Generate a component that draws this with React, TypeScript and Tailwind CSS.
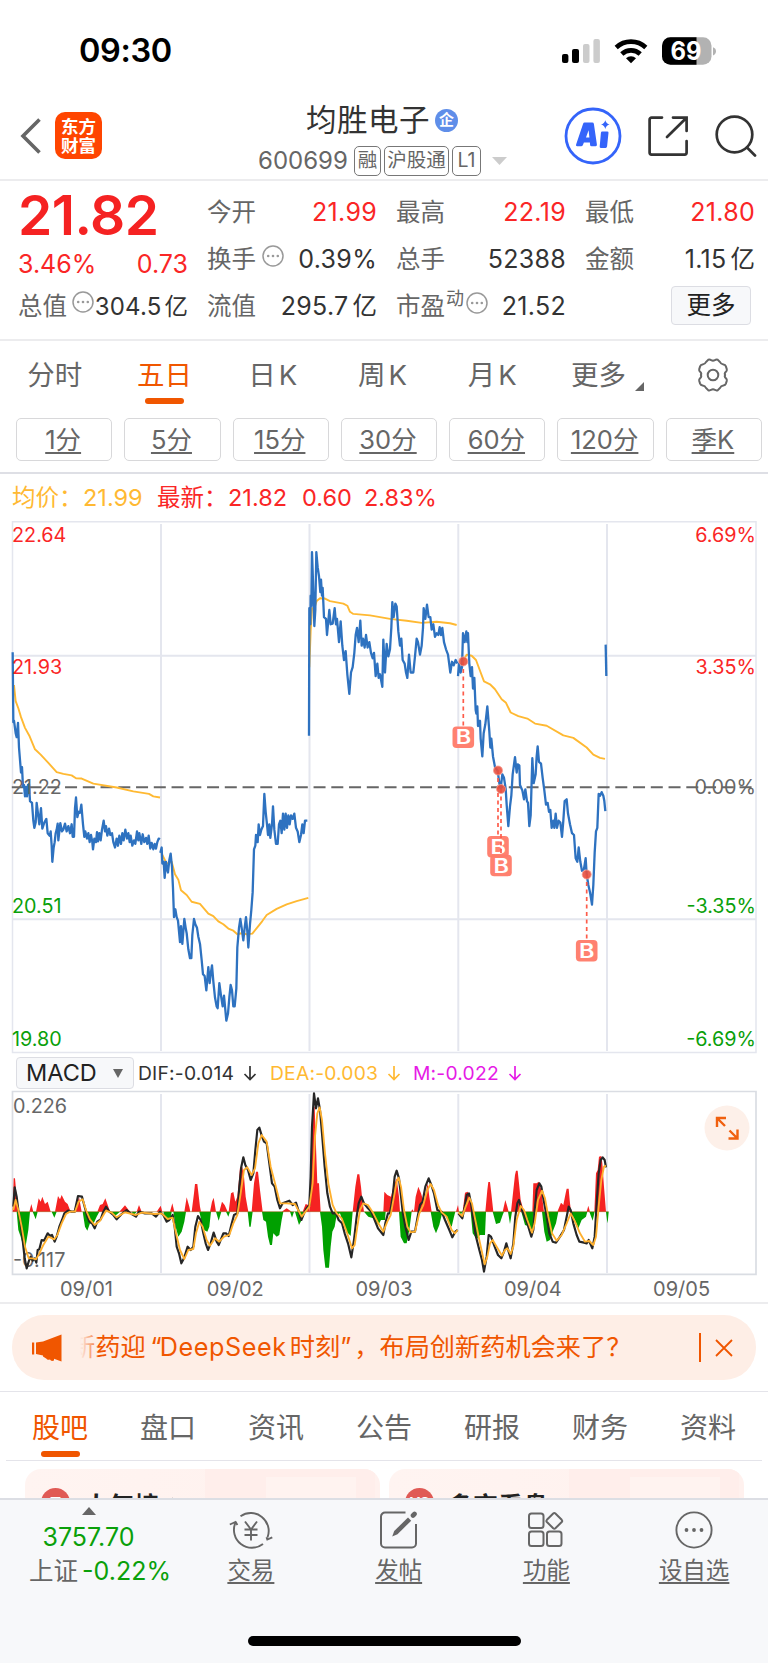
import React from 'react';
import clsx from 'clsx';

// --- Chart data ---
// Price series live on a 2232 x 1487 grid (three units per px across, 2.8 down).
const PRICE_LINES = [
  '38,398 40,594 42,590 47,625 50,636 54,596 57,665 60,700 63,735 66,720 69,775 72,770 75,802 78,775 81,802 84,770 87,768 90,815 96,820 100,870 103,890 107,875 110,820 114,850 118,880 123,835 127,892 133,875 139,865 143,905 149,912 152,900 155,940 157,985 161,945 164,930 167,905 170,895 173,878 175,925 181,877 186,900 190,895 195,878 200,900 205,885 210,905 215,880 218,915 222,915 225,835 228,805 232,860 236,845 240,848 244,825 249,880 253,915 256,900 261,920 265,905 269,930 273,910 277,930 279,950 283,920 288,930 291,902 294,928 298,905 302,925 306,895 311,870 315,900 318,885 322,912 327,892 331,910 336,905 340,930 345,945 350,920 354,940 358,912 363,935 367,905 371,925 376,895 381,920 385,905 389,930 392,912 397,940 402,925 406,935 411,900 415,925 418,905 424,935 428,908 433,930 438,918 442,935 446,912 451,948 455,932 460,950 464,935 468,948 472,930 476,920 480,922',
  '481,960 485,945 487,990 491,985 494,1030 498,985 501,1005 504,1015 508,980 512,962 516,1000 519,1060 522,1140 526,1118 530,1140 534,1150 537,1180 540,1210 543,1165 547,1215 550,1180 553,1145 557,1170 560,1185 565,1230 570,1255 574,1255 577,1190 582,1145 586,1160 591,1170 595,1195 600,1215 605,1260 609,1300 614,1305 619,1345 625,1280 629,1325 632,1300 636,1275 640,1320 645,1365 650,1390 653,1395 658,1325 663,1360 668,1390 672,1360 676,1400 679,1430 684,1410 688,1365 692,1330 696,1345 700,1390 704,1390 709,1340 712,1225 717,1170 721,1145 725,1170 730,1205 734,1170 738,1140 742,1180 745,1225 750,1160 754,1120 758,1070 762,950 766,940 768,910 773,930 776,880 780,910 784,895 789,885 793,795 797,845 801,880 804,910 808,880 811,918 816,880 819,830 823,895 828,935 833,935 837,880 841,870 845,905 849,850 853,895 857,850 861,890 865,855 869,880 873,855 878,865 883,850 888,890 893,900 898,930 903,910 907,880 911,905 915,870 922,870',
  '927,632 928,275 931,320 932,240 934,270 936,118 939,200 943,325 946,280 949,118 953,160 957,185 961,230 963,195 966,240 968,218 972,300 978,305 981,350 985,310 988,280 992,320 998,318 1004,275 1008,320 1011,305 1017,370 1022,312 1027,380 1032,420 1037,395 1042,460 1048,515 1053,455 1058,440 1063,400 1067,350 1071,330 1076,370 1081,310 1085,380 1089,360 1094,385 1098,350 1103,385 1108,370 1113,400 1118,415 1122,400 1127,465 1132,430 1136,470 1140,460 1147,495 1150,363 1155,455 1160,375 1165,410 1170,390 1174,330 1177,258 1181,300 1186,262 1190,270 1195,340 1200,380 1204,360 1208,420 1214,430 1218,455 1222,470 1227,405 1232,455 1240,455 1245,410 1250,360 1254,370 1260,405 1265,380 1269,330 1271,275 1276,305 1281,265 1286,300 1291,300 1295,335 1300,320 1305,355 1310,345 1315,350 1319,328 1323,350 1327,330 1332,370 1338,390 1344,405 1351,455 1356,425 1361,435 1367,420 1372,430',
  '1374,465 1377,430 1382,455 1386,440 1389,345 1394,370 1399,340 1402,370 1404,345 1408,430 1412,465 1416,440 1419,500 1423,470 1427,560 1429,570 1432,550 1434,605 1440,590 1442,640 1447,690 1451,625 1456,600 1462,550 1468,620 1471,665 1474,640 1479,690 1485,720 1493,730 1498,765 1502,780 1507,740 1512,750 1517,780 1520,825 1525,885 1530,830 1534,800 1538,740 1545,692 1550,735 1553,712 1558,715 1560,770 1567,785 1572,810 1576,782 1581,815 1584,820 1588,885 1592,855 1597,695 1601,765 1607,740 1610,690 1613,662 1617,705 1623,710 1628,750 1633,785 1638,825 1643,820 1647,845 1651,840 1655,890 1660,870 1663,890 1667,850 1671,890 1676,870 1681,875 1686,915 1690,870 1694,815 1700,810 1704,850 1710,880 1716,905 1722,910 1727,975 1732,985 1736,945 1741,985 1746,1010 1752,1005 1757,975 1760,1020 1765,1050 1770,1070 1776,1105 1780,1050 1784,960 1788,900 1792,890 1796,795 1800,800 1805,790 1810,800 1813,815 1816,843',
  '1817,377 1819,465',
];

const AVERAGE_LINES = [
  '42,490 47,535 55,555 63,580 75,610 88,632 105,670 122,685 145,708 170,734 190,739 215,743 228,751 245,752 280,766 350,777 400,788 447,795 460,802 480,805',
  '484,960 492,975 500,990 515,985 525,1020 535,1035 543,1065 560,1078 575,1097 600,1103 625,1130 640,1137 655,1152 670,1160 685,1172 700,1178 712,1188 725,1185 740,1188 757,1186 775,1165 787,1151 800,1134 830,1117 860,1104 890,1095 925,1086',
  '928,440 932,340 936,275 943,275 950,255 960,247 975,248 990,255 1030,262 1042,268 1050,285 1060,291 1110,295 1170,305 1220,310 1265,316 1310,313 1350,317 1370,322',
  '1389,425 1400,405 1415,408 1428,420 1440,450 1452,480 1470,488 1485,502 1505,530 1518,540 1532,567 1555,577 1582,584 1605,598 1640,604 1690,631 1720,638 1760,665 1780,685 1800,694 1815,697',
];

// MACD series use three units per px on both axes, zero at y = 485.
const HIST_UP =
  '38,485 41,385 45,385 49,430 53,485 88,485 94,462 100,485 108,485 116,445 122,455 127,440 135,462 143,455 152,485 165,485 174,438 180,448 185,435 195,455 203,462 212,485 220,485 228,468 233,455 237,440 245,485 292,485 300,465 308,462 316,445 325,470 330,485 358,485 375,466 390,485 410,485 417,465 425,485 470,485 482,467 487,485 510,485 517,460 523,485 553,485 560,442 568,470 571,485 575,485 582,430 585,402 592,402 600,470 603,485 630,485 636,455 641,443 648,485 658,485 666,455 674,465 683,485 686,485 693,430 700,426 706,455 712,440 716,400 720,352 727,352 732,380 737,440 745,485 755,485 762,400 768,365 774,365 780,420 788,485 845,485 860,475 875,485 908,485 917,462 925,465 928,485 935,230 939,170 944,170 948,290 952,400 957,400 962,485 1058,485 1066,410 1072,373 1078,373 1083,410 1087,450 1092,485 1150,485 1153,425 1162,435 1173,440 1180,410 1190,385 1197,440 1200,485 1233,485 1237,478 1242,485 1247,440 1255,410 1263,430 1272,460 1277,430 1283,400 1288,440 1295,485 1368,485 1374,465 1377,485 1388,485 1395,428 1403,425 1410,440 1415,485 1456,485 1462,420 1465,396 1470,396 1474,430 1480,485 1508,485 1516,450 1522,470 1526,485 1533,485 1540,420 1545,375 1548,362 1553,362 1557,400 1562,450 1572,485 1597,485 1600,400 1610,400 1616,395 1624,420 1632,485 1672,485 1683,458 1690,465 1697,430 1700,416 1706,416 1709,450 1713,485 1760,485 1765,467 1770,485 1783,485 1788,370 1793,360 1797,320 1804,318 1807,340 1812,410 1818,485';

const HIST_DOWN =
  '50,485 55,540 62,560 70,590 75,600 80,570 85,540 90,485 98,485 107,508 113,485 155,485 163,503 170,485 248,485 255,530 262,542 270,520 280,522 290,500 298,485 330,485 345,498 360,485 395,485 402,495 410,485 490,485 500,517 512,505 515,485 520,485 527,530 535,560 545,545 553,515 558,485 598,485 605,515 612,540 622,545 628,530 633,485 648,485 656,512 664,485 678,485 685,500 690,485 743,485 748,530 752,530 758,485 786,485 790,510 798,515 804,560 810,585 816,585 820,550 830,560 838,555 845,510 850,485 870,485 876,503 882,485 885,485 897,525 905,510 910,485 960,485 966,530 970,600 976,653 987,653 992,590 997,545 1004,530 1010,495 1020,490 1030,520 1040,545 1052,558 1058,485 1092,485 1105,500 1120,505 1135,525 1143,510 1155,510 1157,485 1197,485 1202,560 1212,580 1220,580 1228,540 1235,485 1292,485 1300,530 1308,550 1318,525 1325,495 1337,495 1346,520 1355,530 1362,500 1366,485 1377,485 1380,500 1387,485 1412,485 1418,550 1430,568 1440,555 1455,555 1458,485 1478,485 1488,522 1500,518 1508,495 1512,485 1524,485 1530,522 1536,485 1564,485 1575,525 1590,530 1598,545 1602,485 1626,485 1633,545 1640,575 1650,570 1660,540 1668,520 1675,485 1712,485 1725,510 1735,535 1745,510 1758,500 1762,485 1768,485 1778,512 1784,485 1818,485 1821,510 1823,520 1826,485';

const DIF_LINE =
  '40,470 44,412 50,440 55,480 62,520 68,570 74,625 80,655 86,635 92,620 98,632 104,625 109,638 113,600 118,598 125,570 132,572 143,550 150,558 156,555 164,575 170,560 178,530 186,510 193,490 204,482 215,485 224,485 234,438 246,440 254,470 262,500 268,515 276,520 284,535 292,515 302,508 310,485 318,470 328,485 340,495 350,508 365,492 380,480 395,492 408,500 417,485 435,490 455,490 468,500 480,485 490,495 500,515 508,510 518,495 524,530 530,590 537,610 544,640 552,625 563,590 572,600 580,590 586,530 594,498 602,510 610,550 617,580 624,600 632,580 641,548 650,575 656,585 664,565 670,550 678,550 686,558 694,525 702,495 712,490 718,410 724,350 730,322 736,345 744,360 752,390 760,370 766,300 772,240 778,233 786,260 792,275 800,280 808,340 816,400 824,410 832,450 840,475 848,460 860,455 868,452 878,465 888,458 895,480 904,510 912,490 920,475 928,465 932,380 936,230 942,130 948,175 954,145 960,180 966,250 974,350 982,430 990,470 998,490 1008,490 1016,510 1026,520 1034,550 1044,580 1054,622 1062,570 1070,500 1076,460 1084,440 1092,460 1104,475 1114,485 1124,510 1134,535 1150,555 1156,520 1164,490 1170,490 1178,440 1184,380 1190,362 1197,385 1202,430 1208,485 1216,530 1226,570 1234,545 1245,545 1253,500 1260,465 1268,455 1276,410 1286,385 1294,405 1302,430 1312,480 1325,485 1335,510 1348,540 1357,562 1366,545 1373,540';

const DIF_LAST_DAY =
  '1375,490 1387,505 1394,470 1400,435 1407,430 1413,460 1420,510 1428,560 1438,600 1446,630 1452,665 1460,620 1466,555 1473,560 1484,590 1494,615 1504,625 1512,605 1519,580 1526,605 1532,625 1540,580 1546,500 1552,460 1557,450 1564,475 1572,495 1582,520 1594,560 1600,540 1604,480 1610,420 1618,400 1624,410 1631,450 1640,500 1648,550 1658,575 1668,578 1680,560 1692,540 1700,500 1706,470 1712,480 1720,520 1730,555 1738,575 1752,578 1760,580 1766,570 1777,595 1784,560 1790,460 1796,370 1802,330 1808,322 1814,330 1818,352';

const DEA_LINE =
  '40,480 47,450 55,480 65,530 75,590 86,625 98,625 108,628 118,610 130,585 145,560 163,568 172,555 185,520 198,492 210,485 225,485 236,455 248,448 258,480 270,508 284,525 300,512 318,482 335,488 350,502 375,487 408,495 425,488 465,492 485,490 503,507 518,503 528,550 540,600 553,627 565,600 580,597 588,550 598,515 608,530 620,570 630,587 645,565 658,575 672,560 688,555 700,520 712,495 722,430 732,360 742,352 755,375 765,355 775,280 785,255 800,275 812,350 825,400 840,460 860,460 885,462 905,500 928,470 938,400 945,260 952,190 959,172 966,210 975,310 985,400 998,465 1010,490 1025,505 1040,545 1056,595 1064,585 1072,530 1080,480 1090,460 1104,465 1120,490 1135,520 1150,545 1162,515 1172,495 1182,440 1190,395 1196,383 1203,410 1212,480 1222,530 1232,547 1245,545 1258,490 1270,465 1282,420 1292,402 1302,420 1314,465 1325,487 1340,500 1355,540 1365,550 1373,540';

const DEA_LAST_DAY =
  '1375,488 1387,498 1397,470 1408,443 1416,460 1426,510 1438,570 1454,643 1462,620 1470,580 1478,570 1490,590 1506,617 1515,600 1522,595 1532,612 1540,590 1550,510 1562,468 1572,480 1582,510 1596,548 1604,520 1614,450 1626,422 1635,445 1645,500 1656,550 1670,572 1685,555 1700,520 1712,490 1725,515 1740,550 1755,575 1768,573 1780,585 1788,560 1796,470 1804,390 1812,350 1818,347';

const BUY_MARKS = [
  { x: 463.3, dot: 661.4, tag: 737.3 },
  { x: 498, dot: 770.5, tag: 846.8 },
  { x: 501, dot: 789, tag: 865.5 },
  { x: 586.7, dot: 874.5, tag: 950.8 },
];

const DAY_LINES = [161, 309.5, 458.3, 607];

// --- Header icons ---
const StatusIcons: React.FC = () => (
  <svg width="156" height="30" viewBox="561 36 156 30">
    <rect x="562" y="54" width="6.4" height="9" rx="2" />
    <rect x="572" y="49" width="7" height="14" rx="2" />
    <rect x="583" y="44" width="6.5" height="19" rx="2" fill="#ccc" />
    <rect x="593.4" y="39" width="6.5" height="24" rx="2" fill="#ccc" />
    <g fill="none" stroke="#000" strokeWidth="4.6">
      <path d="M616.2 47.5a21.6 21.6 0 0 1 29.6 0" />
      <path d="M621.8 54a13.4 13.4 0 0 1 18.4 0" />
    </g>
    <path d="M631 63.3l-5-5.1a7.3 7.3 0 0 1 10 0z" />
    <clipPath id="battery">
      <rect x="662" y="37.3" width="49.5" height="27.4" rx="8.5" />
    </clipPath>
    <g clipPath="url(#battery)">
      <rect x="662" y="37" width="50" height="28" fill="#b2b2b2" />
      <rect x="662" y="37" width="34.5" height="28" />
    </g>
    <path d="M713 47.2q3 1.2 3 4.1t-3 4.1z" fill="#b2b2b2" />
    <text x="686" y="60" fill="#fff" fontSize="25" fontWeight="700" textAnchor="middle" textLength="31" lengthAdjust="spacingAndGlyphs">69</text>
  </svg>
);

const AiIcon: React.FC = () => (
  <svg width="58" height="58" viewBox="0 0 58 58">
    <circle cx="29" cy="29" r="27" fill="none" stroke="#3464fa" strokeWidth="2.8" />
    <g fill="#3464fa">
      <path fillRule="evenodd" d="M20.5 15.6h7.8q1.4 0 1.6 1.4l3 20.6q.2 1.6-1.2 1.6h-4.2q-1.3 0-1.4-1.3l-.2-2.3h-6l-1 2.4q-.5 1.2-1.8 1.2h-4q-1.6 0-1-1.6l7-20.8q.4-1.2 1.4-1.2zm4.1 7.6-2.6 7.4h3.4z" />
      <path d="M38.2 24.5h5.1q1.3 0 1.2 1.3l-1.4 13.5q-.2 1.6-1.5 1.6h-4.8q-1.3 0-1.1-1.4l1.2-13.6q.1-1.4 1.3-1.4z" />
      <path d="M41.3 13.2q.9 3.5 4.3 4.4-3.4.9-4.3 4.4-.9-3.5-4.3-4.4 3.4-.9 4.3-4.4z" />
    </g>
  </svg>
);

const ShareIcon: React.FC = () => (
  <svg width="42" height="42" viewBox="0 0 42 42" fill="none" stroke="#333" strokeWidth="2.7" strokeLinecap="round">
    <path d="M15 2.6H4.6a2 2 0 0 0-2 2v33a2 2 0 0 0 2 2h33a2 2 0 0 0 2-2V26" />
    <path d="M26 2.6h13.6V16M39 3.2 20 22" />
  </svg>
);

const SearchIcon: React.FC = () => (
  <svg width="42" height="42" viewBox="0 0 42 42" fill="none" stroke="#333" strokeWidth="2.7" strokeLinecap="round">
    <circle cx="19.5" cy="19.5" r="17.8" />
    <path d="M32 32.5l8 8" />
  </svg>
);

const InfoDots: React.FC = () => (
  <svg className="shrink-0" width="22" height="22" viewBox="0 0 22 22">
    <circle cx="11" cy="11" r="10" fill="none" stroke="#999" strokeWidth="1.5" />
    <g fill="#999">
      <circle cx="6.2" cy="11" r="1.3" />
      <circle cx="11" cy="11" r="1.3" />
      <circle cx="15.8" cy="11" r="1.3" />
    </g>
  </svg>
);

const StockTag: React.FC<{ label: string; className: string }> = ({ label, className }) => (
  <span className={clsx('flex h-[30px] items-center justify-center rounded-[5px] border-[1.5px] border-[#777] text-[19.5px] text-[#666]', className)}>
    {label}
  </span>
);

const Header: React.FC = () => (
  <header className="flex h-[81px] items-start border-b-2 border-[#ececee]">
    <svg className="mt-[18px] ml-[19px]" width="24" height="36" viewBox="0 0 24 36" fill="none" stroke="#666" strokeWidth="3.6">
      <path d="M20.5 1.5 4 18l16.5 16.5" />
    </svg>
    <div className="mt-[12px] ml-[12px] flex h-[47px] w-[47px] flex-col items-center justify-center rounded-[10px] bg-[#ff4500] text-[17.5px] leading-[19px] font-bold text-white">
      <span>东方</span>
      <span>财富</span>
    </div>
    <div className="ml-[156px] w-[256px]">
      <div className="flex h-[40px] items-center pl-[48px] text-[30.5px] tracking-[0.5px] text-[#333]">
        均胜电子
        <span className="ml-[5px] flex h-[23px] w-[23px] items-center justify-center rounded-full bg-[#5f8ee9] text-[15px] font-bold tracking-normal text-white">企</span>
      </div>
      <div className="mt-[5px] flex h-[32px] items-center text-[#666]">
        <span className="w-[96px] text-[24px]">600699</span>
        <StockTag label="融" className="w-[27px]" />
        <StockTag label="沪股通" className="ml-[3px] w-[65px]" />
        <StockTag label="L1" className="ml-[3px] w-[29px]" />
        <svg className="ml-[11px]" width="15" height="8" viewBox="0 0 15 8" fill="#ccc">
          <path d="M0 0h15L7.5 8z" />
        </svg>
      </div>
    </div>
    <div className="mt-[7px] ml-[50px]">
      <AiIcon />
    </div>
    <div className="mt-[15px] ml-[25px]">
      <ShareIcon />
    </div>
    <div className="mt-[15px] ml-[26px]">
      <SearchIcon />
    </div>
  </header>
);

// --- Quote summary ---
interface StatProps {
  label: string;
  value: string;
  unit?: string;
  className: string;
  up?: boolean;
  info?: boolean;
  mark?: string;
}

const Stat: React.FC<StatProps> = ({ label, value, unit, className, up, info, mark }) => (
  <div className={clsx('flex h-[47px] items-center justify-between whitespace-nowrap', className)}>
    <span className="flex items-center text-[24.5px] text-[#666]">
      {label}
      {mark && <sup className="top-[-8px] ml-[1px] text-[18px] leading-none">{mark}</sup>}
      {info && (
        <span className={clsx('relative -top-[4px]', mark ? 'ml-[2px]' : 'ml-[6px]')}>
          <InfoDots />
        </span>
      )}
    </span>
    <span className={clsx('text-[25px] tracking-[0.3px]', up ? 'text-[#fa2626]' : 'text-[#333]')}>
      {value}
      {unit && <span className="ml-[4px] text-[24.5px] tracking-normal">{unit}</span>}
    </span>
  </div>
);

const QuoteSummary: React.FC = () => (
  <section className="flex h-[160px] border-b-2 border-[#ececee] pl-[18px]">
    <div className="w-[170px]">
      <div className="flex h-[66px] items-center pt-[2px] text-[55px] leading-none font-semibold tracking-[-0.5px] text-[#f52222]">21.82</div>
      <div className="flex h-[36px] items-center justify-between text-[25px] text-[#fa2626]">
        <span>3.46%</span>
        <span>0.73</span>
      </div>
      <div className="flex h-[46px] items-center justify-between whitespace-nowrap text-[24.5px]">
        <span className="flex items-center text-[#666]">
          总值
          <span className="relative -top-[4px] ml-[5px]">
            <InfoDots />
          </span>
        </span>
        <span className="pt-[2px] text-[24px] tracking-[0.2px] text-[#333]">
          304.5<span className="ml-[3px] text-[23.5px] tracking-normal">亿</span>
        </span>
      </div>
    </div>
    <div className="ml-[19px] pt-[8px]">
      <Stat className="w-[170px]" label="今开" value="21.99" up />
      <Stat className="w-[170px]" label="换手" value="0.39%" info />
      <Stat className="w-[170px]" label="流值" value="295.7" unit="亿" />
    </div>
    <div className="ml-[19px] pt-[8px]">
      <Stat className="w-[170px]" label="最高" value="22.19" up />
      <Stat className="w-[170px]" label="总手" value="52388" />
      <Stat className="w-[170px]" label="市盈" value="21.52" mark="动" info />
    </div>
    <div className="ml-[19px] pt-[8px]">
      <Stat className="w-[170px]" label="最低" value="21.80" up />
      <Stat className="w-[170px]" label="金额" value="1.15" unit="亿" />
      <button className="mt-[3px] ml-[86px] flex h-[39px] w-[80px] items-center justify-center rounded-[4px] border-[1.5px] border-[#dcdde3] bg-[#f7f8fa] text-[24.5px] text-[#222]">
        更多
      </button>
    </div>
  </section>
);

// --- Period switcher ---
const PERIODS = ['分时', '五日', '日K', '周K', '月K', '更多'];
const MINUTES = ['1分', '5分', '15分', '30分', '60分', '120分', '季K'];

const PeriodTabs: React.FC = () => (
  <nav className="h-[133px] border-b-2 border-[#dedfe5]">
    <div className="grid h-[77px] grid-cols-7 text-[27.5px] text-[#666]">
      {PERIODS.map(p => (
        <div key={p} className={clsx('flex flex-col items-center pt-[14px]', p === '五日' && 'text-[#f05600]')}>
          <span className={clsx('relative flex h-[41px] items-center leading-none', p.endsWith('K') && 'tracking-[3px]', p === '更多' && '-left-[5px]')}>
            {p}
            {p === '更多' && (
              <svg className="absolute right-[-18px] bottom-[5px]" width="9" height="9" viewBox="0 0 9 9" fill="#666">
                <path d="M9 0v9H0z" />
              </svg>
            )}
          </span>
          {p === '五日' && <i className="mt-[2px] h-[6px] w-[39px] rounded-full bg-[#f05600]" />}
        </div>
      ))}
      <div className="flex justify-center pt-[17px]">
        <svg width="34" height="34" viewBox="0 0 34 34" fill="none" stroke="#666" strokeWidth="2">
          <path d="M12.2 1.8q1.6-.6 3 .4 1.800 1.200 3.600 0 1.400-1 3-.4l2.200 2.200q.9 2.300 3.400 2.600 1.900.2 2.500 1.800l.9 2.800q.3 1.600-.9 2.600-1.800 1.500-.8 3.200-1 1.700.8 3.200 1.200 1 .9 2.600l-.9 2.800q-.6 1.600-2.500 1.800-2.500.3-3.400 2.600l-2.200 2.200q-1.600.6-3-.4-1.800-1.200-3.600 0-1.400 1-3 .4l-2.200-2.200q-.9-2.300-3.400-2.600-1.900-.2-2.500-1.800l-.9-2.800q-.3-1.600.9-2.600 1.800-1.500.8-3.200 1-1.700-.8-3.200-1.200-1-.9-2.600l.9-2.800q.6-1.600 2.500-1.800 2.500-.3 3.400-2.600z" />
          <circle cx="17" cy="17" r="5.3" />
        </svg>
      </div>
    </div>
    <div className="flex gap-[12px] pl-[16px]">
      {MINUTES.map(m => (
        <button key={m} className="flex h-[43px] w-[96.3px] shrink-0 items-center justify-center rounded-[5px] border-[1.5px] border-[#d8d8da] text-[25.5px] text-[#666]">
          <span className="relative top-[1px] right-[1px] underline decoration-2 underline-offset-[3px]">{m}</span>
        </button>
      ))}
    </div>
  </nav>
);

// --- Intraday chart ---
const PriceChart: React.FC = () => (
  <svg className="block" width="768" height="535" viewBox="0 521 768 535" fontSize="19.8">
    <g fill="none" stroke="#e4e6ee" strokeWidth="2">
      <path d="M12.5 521.7H756V1052.5H12.5z" strokeWidth="1.5" />
      {DAY_LINES.map(x => (
        <path key={x} d={`M${x} 524V1051`} />
      ))}
      <path d="M12 655.7H756M12 919.2H756" />
    </g>
    <path d="M11.8 787.3H756" stroke="#666" strokeWidth="2" strokeDasharray="12 5.75" />
    <g transform="translate(0 510) scale(.33333 .35714)" fill="none" strokeLinejoin="round">
      {AVERAGE_LINES.map((points, i) => (
        <polyline key={i} points={points} stroke="#ffb932" strokeWidth="1.9" vectorEffect="non-scaling-stroke" />
      ))}
      {PRICE_LINES.map((points, i) => (
        <polyline key={i} points={points} stroke="#2e72c0" strokeWidth="2.3" vectorEffect="non-scaling-stroke" />
      ))}
    </g>
    <g fill="#fa2626">
      <text x="12" y="542">22.64</text>
      <text x="12" y="674">21.93</text>
      <text x="756" y="542" textAnchor="end">6.69%</text>
      <text x="756" y="674" textAnchor="end">3.35%</text>
    </g>
    <g fill="#666">
      <text x="12" y="794">21.22</text>
      <text x="756" y="794" textAnchor="end">0.00%</text>
    </g>
    <g fill="#0aa00a">
      <text x="12" y="913.4">20.51</text>
      <text x="12" y="1046">19.80</text>
      <text x="756" y="913.4" textAnchor="end">-3.35%</text>
      <text x="756" y="1046" textAnchor="end">-6.69%</text>
    </g>
    {BUY_MARKS.map(m => (
      <g key={m.x}>
        <path d={`M${m.x} ${m.dot}V${m.tag - 10}`} stroke="#fd5c4a" strokeWidth="1.7" strokeDasharray="4 3.5" />
        <circle cx={m.x} cy={m.dot} r="4.5" fill="#e8503f" fillOpacity=".9" stroke="#f79a8e" strokeWidth=".8" />
        <rect x={m.x - 10.8} y={m.tag - 10.8} width="21.6" height="21.6" rx="4" fill="#ff7a68" fillOpacity=".95" />
        <text x={m.x - 7.6} y={m.tag + 7} fill="#fff" fontSize="19.5" fontWeight="600" textLength="15.5" lengthAdjust="spacingAndGlyphs">B</text>
      </g>
    ))}
  </svg>
);

// --- MACD panel ---
const DownArrow: React.FC = () => (
  <svg width="14" height="16" viewBox="0 0 14 16" fill="none" stroke="currentColor" strokeWidth="1.7">
    <path d="M7 1v13.5M1.5 9 7 14.5 12.5 9" />
  </svg>
);

const MacdBar: React.FC = () => (
  <div className="flex h-[34px] items-center pl-[16px] text-[19.3px] tracking-[0.2px] whitespace-nowrap text-[#333]">
    <button className="flex h-[32px] w-[118px] items-center justify-between rounded-[4px] border-[1.5px] border-[#dcdde3] bg-[#f7f8fa] pr-[10px] pl-[9px] text-[23.5px] tracking-normal text-[#222]">
      MACD
      <svg width="10" height="9" viewBox="0 0 10 9" fill="#666">
        <path d="M0 0h10L5 9z" />
      </svg>
    </button>
    <span className="ml-[4px] flex w-[132px] items-center gap-[9px]">DIF:-0.014 <DownArrow /></span>
    <span className="flex w-[143px] items-center gap-[9px] text-[#ffb932]">DEA:-0.003 <DownArrow /></span>
    <span className="flex items-center gap-[9px] text-[#e61ae6]">M:-0.022 <DownArrow /></span>
  </div>
);

const MacdChart: React.FC = () => (
  <svg className="block" width="768" height="186" viewBox="0 1090 768 186" fontSize="19.8">
    <g fill="none" stroke="#e4e6ee" strokeWidth="2">
      <path d="M12.5 1091.5H756V1274.3H12.5z" strokeWidth="1.7" stroke="#dadde3" />
      {DAY_LINES.map(x => (
        <path key={x} d={`M${x} 1094V1273`} />
      ))}
    </g>
    <g fill="#666">
      <text x="13" y="1112.8">0.226</text>
      <text x="13" y="1266.8">-0.117</text>
    </g>
    <g transform="translate(0 1050) scale(.33333)" fill="none" strokeLinejoin="round">
      <polygon points={HIST_UP} fill="#f52222" />
      <polygon points={HIST_DOWN} fill="#00a000" />
      <path d="M38 485H1826" stroke="#a05a10" strokeWidth="1.5" />
      <polyline points={DIF_LINE} stroke="#262626" strokeWidth="6.5" />
      <polyline points={DIF_LAST_DAY} stroke="#262626" strokeWidth="6.5" />
      <polyline points={DEA_LINE} stroke="#ffb02e" strokeWidth="5.5" />
      <polyline points={DEA_LAST_DAY} stroke="#ffb02e" strokeWidth="5.5" />
    </g>
    <circle cx="727" cy="1128" r="22.5" fill="#fdf0e9" />
    <path d="M717 1127v-9h9M717.500 1118.500l7.500 7.500M737.500 1129.500v9h-9M737 1138l-7.500-7.500" fill="none" stroke="#f0600f" strokeWidth="2.4" />
  </svg>
);

const DATES = ['09/01', '09/02', '09/03', '09/04', '09/05'];

// --- News ticker ---
const Ticker: React.FC = () => (
  <div className="h-[88px] border-b-[1.5px] border-[#e4e4ea] px-[12px] pt-[11px]">
    <div className="flex h-[65px] items-center rounded-[32px] bg-[#feeee6] text-[#f05600]">
      <svg className="ml-[19px] shrink-0" width="32" height="28" viewBox="0 0 32 28" fill="#f05600">
        <path d="M1 8.5h2.2v12H1zM5 8.500 12 7.500 30.500.5v27l-7.500-2.700v1.700q-3 1.200-4-1-3 1-3.500-.8L12 22.500v-1L5 20z" />
      </svg>
      <div className="relative ml-[17px] flex h-[40px] w-[560px] shrink-0 items-center overflow-hidden text-[25.2px] whitespace-nowrap">
        <span className="-ml-[10px]">新药迎</span>
        <span className="ml-[5px]">“</span>
        <span className="-ml-[2px] tracking-[0.6px]">DeepSeek</span>
        <span className="ml-[3px]">时刻”</span>
        <span className="ml-[3px]">，布局创新药机会来了？</span>
        <i className="absolute inset-y-0 left-0 w-[18px] bg-gradient-to-r from-[#feeee6] to-[#feeee6]/20" />
      </div>
      <i className="ml-[59px] h-[29px] w-[1.5px] shrink-0 bg-[#f05600]" />
      <svg className="ml-[14px] shrink-0" width="18" height="18" viewBox="0 0 18 18" stroke="#f05600" strokeWidth="1.8">
        <path d="M1 1l16 16M17 1 1 17" />
      </svg>
    </div>
  </div>
);

// --- Content tabs ---
const SECTIONS = ['股吧', '盘口', '资讯', '公告', '研报', '财务', '资料'];

const SectionTabs: React.FC = () => (
  <nav className="mx-[6px] grid h-[69px] grid-cols-7 border-b-[1.5px] border-[#e4e4ea] text-[28px] text-[#666]">
    {SECTIONS.map((s, i) => (
      <div key={s} className={clsx('flex flex-col items-center pt-[16px]', i === 0 && 'text-[#f05600]')}>
        <span className="flex h-[40px] items-center leading-none">{s}</span>
        {i === 0 && <i className="mt-[3px] h-[6px] w-[39px] rounded-full bg-[#f05600]" />}
      </div>
    ))}
  </nav>
);

const TopicCard: React.FC<{ title: string; badge: string; arrow?: boolean }> = ({ title, badge, arrow }) => (
  <div className="relative flex h-[80px] flex-1 overflow-hidden rounded-[16px] bg-gradient-to-r from-[#fff4f1] to-[#fff1ee] pt-[19px] pl-[16px]">
    <i className="absolute top-0 left-[180px] h-full w-[170px] bg-[#ffeeeb]" />
    <i className="absolute top-[8px] left-[241px] h-full w-[90px] bg-[#fff3f0]" />
    <span className="flex h-[29px] w-[29px] items-center justify-center rounded-full bg-[#e05a55] text-[14px] leading-none font-bold text-white">{badge}</span>
    <span className="mt-[3px] ml-[14px] text-[25px] leading-[31px] font-bold text-[#222]">{title}</span>
    {arrow && (
      <svg className="mt-[9px] ml-[12px]" width="8" height="14" viewBox="0 0 8 14" fill="none" stroke="#999" strokeWidth="1.5">
        <path d="M1 1l6 6-6 6" />
      </svg>
    )}
  </div>
);

// --- Bottom bar ---
const TradeIcon: React.FC = () => (
  <svg width="44" height="38" viewBox="0 0 44 38" fill="none" stroke="#666" strokeWidth="1.9">
    <path d="M11.5 5.2A18 18 0 0 1 38.5 26.5M34 33A18 18 0 0 1 6.500 11.5" />
    <path d="M.8 13.5 6.6 11 8.4 14M37.5 26.3l.8 2.2 5-2.2" />
    <path d="M16 10.5l6 8 6-8M22 18.5v11M15.5 18.5h13M15.5 24h13" />
  </svg>
);

const PostIcon: React.FC = () => (
  <svg width="38" height="38" viewBox="0 0 38 38" fill="none" stroke="#666" strokeWidth="2">
    <path d="M25.5 1.5H5a4 4 0 0 0-4 4V32.5a4 4 0 0 0 4 4H32a4 4 0 0 0 4-4V13" />
    <path d="M33 4.500 34.500 3" strokeWidth="4.6" strokeLinecap="round" />
    <path d="M12.2 25.5l2-5.5L28 6.5l3.2 3.2L17.5 23.2z" fill="#666" stroke="none" />
  </svg>
);

const GridIcon: React.FC = () => (
  <svg width="38" height="38" viewBox="0 0 38 38" fill="none" stroke="#666" strokeWidth="2">
    <rect x="2" y="2.5" width="14.5" height="14.5" rx="2.5" />
    <rect x="2" y="20.5" width="14.5" height="14.5" rx="2.5" />
    <rect x="20" y="20.5" width="14.5" height="14.5" rx="2.5" />
    <path d="M26.2 2.5q1.1-1 2.2 0l6.3 6.3q1 1.1 0 2.2l-6.3 6.3q-1.1 1-2.2 0L19.9 11q-1-1.1 0-2.2z" />
  </svg>
);

const MoreIcon: React.FC = () => (
  <svg width="38" height="38" viewBox="0 0 38 38" fill="#666">
    <circle cx="19" cy="19" r="17.6" fill="none" stroke="#666" strokeWidth="1.9" />
    <circle cx="11.5" cy="19" r="1.9" />
    <circle cx="19" cy="19" r="1.9" />
    <circle cx="26.5" cy="19" r="1.9" />
  </svg>
);

const ACTIONS = [
  { label: '交易', icon: <TradeIcon /> },
  { label: '发帖', icon: <PostIcon /> },
  { label: '功能', icon: <GridIcon /> },
  { label: '设自选', icon: <MoreIcon /> },
];

const BottomBar: React.FC = () => (
  <footer className="relative flex h-[165px] flex-col border-t-2 border-[#dcdee4] bg-[#f7f8fa]">
    <div className="flex h-[136px]">
      <div className="flex w-[177px] flex-col items-center pt-[7px] text-[25px] whitespace-nowrap text-[#0aa00a]">
        <svg width="14" height="8" viewBox="0 0 14 8" fill="#666">
          <path d="M0 8h14L7 0z" />
        </svg>
        <span className="mt-[5px] leading-[34px]">3757.70</span>
        <span className="ml-[29px] flex w-[142px] justify-between self-start leading-[34px]">
          <span className="text-[24.5px] text-[#666]">上证</span>
          <span>-0.22%</span>
        </span>
      </div>
      {ACTIONS.map(a => (
        <div key={a.label} className="flex flex-1 flex-col items-center pt-[11px] text-[23.5px] text-[#666]">
          {a.icon}
          <span className="mt-[5px] leading-[34px] underline decoration-[1.5px] underline-offset-[3px]">{a.label}</span>
        </div>
      ))}
    </div>
    <i className="h-[10px] w-[273px] self-center rounded-full bg-black" />
  </footer>
);

const App: React.FC = () => (
  <div className="h-[1663px] w-[768px] overflow-hidden bg-white font-['Inter','Noto_Sans_CJK_SC',sans-serif]">
    <div className="flex h-[100px] items-start justify-between pt-[36px] pr-[51px] pl-[79px]">
      <span className="text-[32.5px] leading-[30px] font-semibold tracking-[-0.4px]">09:30</span>
      <StatusIcons />
    </div>
    <Header />
    <QuoteSummary />
    <PeriodTabs />
    <div className="flex h-[47px] items-center pl-[12px] text-[23.5px] whitespace-nowrap text-[#fa2626]">
      <span className="w-[71px] text-[#ffb932]">均价：</span>
      <span className="w-[74px] text-[#ffb932]">21.99</span>
      <span className="w-[71px]">最新：</span>
      <span className="w-[74px]">21.82</span>
      <span className="w-[62px]">0.60</span>
      <span>2.83%</span>
    </div>
    <PriceChart />
    <MacdBar />
    <MacdChart />
    <div className="flex h-[28px] border-b-2 border-[#ececee] px-[12px] text-[20px] text-[#666]">
      {DATES.map(d => (
        <span key={d} className="flex-1 text-center leading-[26px]">{d}</span>
      ))}
    </div>
    <Ticker />
    <SectionTabs />
    <div className="flex h-[37px] gap-[9px] overflow-hidden pt-[8px] pr-[24px] pl-[25px]">
      <TopicCard title="人气榜" badge="日" arrow />
      <TopicCard title="多空看盘" badge="VS" />
    </div>
    <BottomBar />
  </div>
);

export default App;
